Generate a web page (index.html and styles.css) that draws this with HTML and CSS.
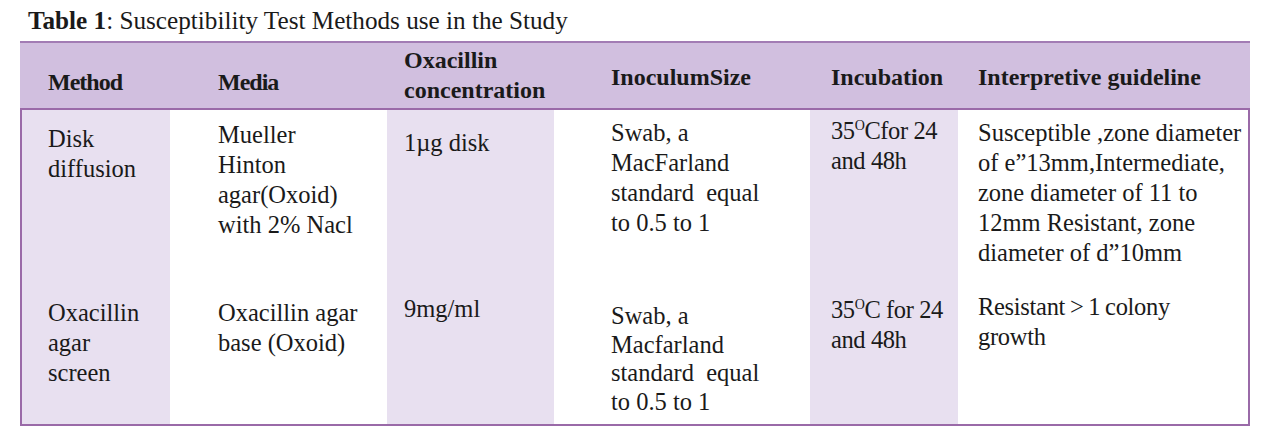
FILE: index.html
```html
<!DOCTYPE html>
<html>
<head>
<meta charset="utf-8">
<link rel="stylesheet" href="styles.css">
</head>
<body>
<div class="page">
  <div class="caption"><b>Table 1</b>: Susceptibility Test Methods use in the Study</div>
  <div class="table">
    <div class="row head">
      <div class="c c1 h hlow tight">Method</div>
      <div class="c c2 h hlow tight">Media</div>
      <div class="c c3 h">Oxacillin<br>concentration</div>
      <div class="c c4 h">InoculumSize</div>
      <div class="c c5 h">Incubation</div>
      <div class="c c6 h">Interpretive guideline</div>
    </div>
    <div class="row r1">
      <div class="c c1 shade p14">Disk<br>diffusion</div>
      <div class="c c2 p10">Mueller<br>Hinton<br>agar(Oxoid)<br>with 2% Nacl</div>
      <div class="c c3 shade p18">1µg disk</div>
      <div class="c c4 p8">Swab, a<br>MacFarland<br>standard&nbsp; equal<br>to 0.5 to 1</div>
      <div class="c c5 shade p6 tightl">35<sup>O</sup>Cfor 24<br>and 48h</div>
      <div class="c c6 p8">Susceptible ,zone diameter<br>of e”13mm,Intermediate,<br>zone diameter of 11 to<br>12mm Resistant, zone<br>diameter of d”10mm</div>
    </div>
    <div class="row r2">
      <div class="c c1 shade p13">Oxacillin<br>agar<br>screen</div>
      <div class="c c2 p13">Oxacillin agar<br>base (Oxoid)</div>
      <div class="c c3 shade p9">9mg/ml</div>
      <div class="c c4 p17 l29">Swab, a<br>Macfarland<br>standard&nbsp; equal<br>to 0.5 to 1</div>
      <div class="c c5 shade p10 tightl">35<sup>O</sup>C for 24<br>and 48h</div>
      <div class="c c6 p7 tightw">Resistant &gt; 1 colony<br>growth</div>
    </div>
  </div>
</div>
</body>
</html>
```

FILE: styles.css
```css
html, body {
  margin: 0;
  padding: 0;
  background: #ffffff;
}
body {
  font-family: "Liberation Serif", "Times New Roman", serif;
  color: #1a1a1a;
  width: 1269px;
  height: 442px;
  overflow: hidden;
}
.page {
  padding: 6px 0 0 20px;
}
.caption {
  font-size: 25.2px;
  line-height: 30px;
  padding-left: 8px;
  height: 35px;
}
.caption b {
  font-weight: bold;
}
.table {
  width: 1230px;
  border-left: 2px solid #9a6aa8;
  border-right: 2px solid #9a6aa8;
  border-bottom: 2px solid #9a6aa8;
  box-sizing: border-box;
}
.row {
  display: grid;
  grid-template-columns: 148px 217px 167px 256px 148px 290px;
}
.head {
  background: #d1bfdf;
  border-top: 2px solid #a27cb4;
  border-bottom: 2px solid #9a6aa8;
  height: 69px;
  box-sizing: border-box;
  margin: 0 -2px;
  padding: 0 2px;
}
.r1 { height: 175px; }
.r2 { height: 139px; }
.c {
  font-size: 24.5px;
  line-height: 30px;
  box-sizing: border-box;
}
.l29 { line-height: 28.5px; }
.h {
  font-weight: bold;
  font-size: 24px;
  line-height: 30px;
  display: flex;
  flex-direction: column;
  justify-content: center;
  padding-top: 2px;
}
.h.hlow { padding-top: 12px; }
.h.c3 { display: block; padding-top: 2px; }
.tight { letter-spacing: -1px; }
.tightl { letter-spacing: -0.4px; }
.tightw { word-spacing: -1px; letter-spacing: -0.3px; }
.shade { background: #e8e0f0; }
.c1 { padding-left: 26px; }
.c2 { padding-left: 48px; }
.c3 { padding-left: 17px; }
.c4 { padding-left: 57px; }
.c5 { padding-left: 21px; }
.c6 { padding-left: 20px; }
sup {
  font-size: 14px;
  line-height: 0;
  vertical-align: 9px;
}
.p6 { padding-top: 6px; }
.p7 { padding-top: 7px; }
.p8 { padding-top: 8px; }
.p9 { padding-top: 9px; }
.p10 { padding-top: 10px; }
.p13 { padding-top: 13px; }
.p14 { padding-top: 14px; }
.p17 { padding-top: 17px; }
.p18 { padding-top: 18px; }
.p22 { padding-top: 22px; }
```
